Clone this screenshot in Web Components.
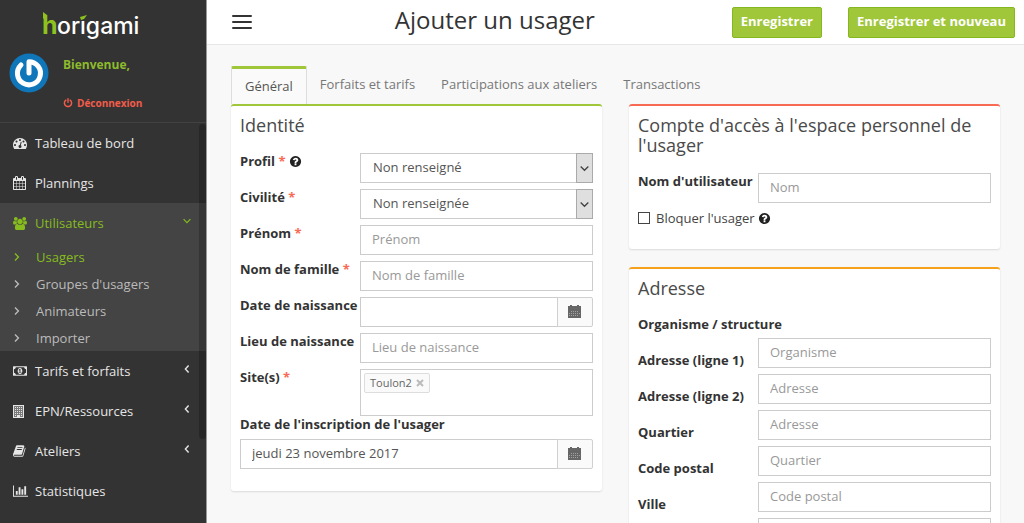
<!DOCTYPE html>
<html lang="fr">
<head>
<meta charset="utf-8">
<title>Ajouter un usager</title>
<style>
html, body { margin: 0; height: 100%; }
body { font: 13px/18px "Open Sans", "Noto Sans", sans-serif; color: #555; background: #f8f8f8; overflow: hidden; }
</style>
</head>
<body>
<horigami-app></horigami-app>
<script>
const BASE = `<style>*,*::before,*::after{box-sizing:border-box}a{color:inherit;text-decoration:none}</style>`;
const define = (name, markup, setup) => {
  const template = document.createElement('template');
  customElements.define(name, class extends HTMLElement {
    connectedCallback() {
      if (this.shadowRoot) return;
      template.innerHTML = BASE + (typeof markup === 'function' ? markup(this) : markup);
      this.attachShadow({ mode: 'open' }).append(template.content.cloneNode(true));
      if (setup) setup(this, this.shadowRoot);
    }
  });
};
const attr = (el, name, fallback = '') => el.getAttribute(name) ?? fallback;

const path = (box, d) => [box, `<path d="${d}"/>`];
const ICONS = {
  power: path('0 0 1792 1792', 'M1664 896q0 156-61 298t-164 245-245 164-298 61-298-61-245-164-164-245-61-298q0-182 80.5-343t226.5-270q43-32 95.5-25t83.5 50q32 42 24.5 94.5t-49.5 84.5q-98 74-151.5 181t-53.5 228q0 104 40.5 198.5t109.5 163.5 163.5 109.5 198.5 40.5 198.5-40.5 163.5-109.5 109.5-163.5 40.5-198.5q0-121-53.5-228t-151.5-181q-42-32-49.5-84.5t24.5-94.5q31-43 84-50t95 25q146 109 226.5 270t80.5 343zm-640-768v640q0 52-38 90t-90 38-90-38-38-90v-640q0-52 38-90t90-38 90 38 38 90z'),
  help: path('0 0 1792 1792', 'M1024 1376v-192q0-14-9-23t-23-9h-192q-14 0-23 9t-9 23v192q0 14 9 23t23 9h192q14 0 23-9t9-23zm256-672q0-88-55.5-163t-138.5-116-170-41q-243 0-371 213-15 24 8 42l132 100q7 6 19 6 16 0 25-12 53-68 86-92 34-24 86-24 48 0 85.5 26t37.5 59q0 38-20 61t-68 45q-63 28-115.5 86.5t-52.5 125.5v36q0 14 9 23t23 9h192q14 0 23-9t9-23q0-19 21.5-49.5t54.5-49.5q32-18 49-28.5t46-35 44.5-48 28-60.5 12.5-81zm384 192q0 209-103 385.5t-279.5 279.5-385.5 103-385.5-103-279.5-279.5-103-385.5 103-385.5 279.5-279.5 385.5-103 385.5 103 279.5 279.5 103 385.5z'),
  calendar: path('64 0 1664 1792', 'M192 1664h288v-288h-288v288zm352 0h320v-288h-320v288zm-352-352h288v-320h-288v320zm352 0h320v-320h-320v320zm-352-384h288v-288h-288v288zm736 736h320v-288h-320v288zm-384-736h320v-288h-320v288zm768 736h288v-288h-288v288zm-384-352h320v-320h-320v320zm-352-864v-288q0-13-9.5-22.5t-22.5-9.5h-64q-13 0-22.5 9.5t-9.5 22.5v288q0 13 9.5 22.5t22.5 9.5h64q13 0 22.5-9.5t9.5-22.5zm736 864h288v-320h-288v320zm-384-384h320v-288h-320v288zm384 0h288v-288h-288v288zm32-480v-288q0-13-9.5-22.5t-22.5-9.5h-64q-13 0-22.5 9.5t-9.5 22.5v288q0 13 9.5 22.5t22.5 9.5h64q13 0 22.5-9.5t9.5-22.5zm384-64v1280q0 52-38 90t-90 38h-1408q-52 0-90-38t-38-90v-1280q0-52 38-90t90-38h128v-96q0-66 47-113t113-47h64q66 0 113 47t47 113v96h384v-96q0-66 47-113t113-47h64q66 0 113 47t47 113v96h128q52 0 90 38t38 90z'),
  dashboard: path('0 0 1792 1792', 'M384 1152q0-53-37.5-90.5t-90.5-37.5-90.5 37.5-37.5 90.5 37.5 90.5 90.5 37.5 90.5-37.5 37.5-90.5zm192-448q0-53-37.5-90.5t-90.5-37.5-90.5 37.5-37.5 90.5 37.5 90.5 90.5 37.5 90.5-37.5 37.5-90.5zm428 481l101-382q6-26-7.5-48.5t-38.5-29.5-48 6.5-30 39.5l-101 382q-60 5-107 43.5t-63 98.5q-20 77 20 146t117 89 146-20 89-117q16-60-6-117t-72-91zm660-33q0-53-37.5-90.5t-90.5-37.5-90.5 37.5-37.5 90.5 37.5 90.5 90.5 37.5 90.5-37.5 37.5-90.5zm-640-640q0-53-37.5-90.5t-90.5-37.5-90.5 37.5-37.5 90.5 37.5 90.5 90.5 37.5 90.5-37.5 37.5-90.5zm448 192q0-53-37.5-90.5t-90.5-37.5-90.5 37.5-37.5 90.5 37.5 90.5 90.5 37.5 90.5-37.5 37.5-90.5zm320 448q0 261-141 483-19 29-54 29h-1402q-35 0-54-29-141-221-141-483 0-182 71-348t191-286 286-191 348-71 348 71 286 191 191 286 71 348z'),
  chart: path('0 0 2048 1792', 'M640 896v512h-256v-512h256zm384-512v1024h-256v-1024h256zm1024 1152v128h-2048v-1536h128v1408h1920zm-640-896v768h-256v-768h256zm384-384v1152h-256v-1152h256z'),
  money: path('0 0 1920 1792', 'M768 1152h384v-96h-128v-448h-114l-148 137 77 80q42-37 55-57h2v288h-128v96zm512-256q0 70-21 142t-59.5 134-101.5 101-138 39-138-39-101.5-101-59.5-134-21-142 21-142 59.5-134 101.5-101 138-39 138 39 101.5 101 59.5 134 21 142zm512 256v-512q-106 0-181-75t-75-181h-1152q0 106-75 181t-181 75v512q106 0 181 75t75 181h1152q0-106 75-181t181-75zm128-832v1152q0 26-19 45t-45 19h-1792q-26 0-45-19t-19-45v-1152q0-26 19-45t45-19h1792q26 0 45 19t19 45z'),
  users: path('0 0 1920 1792', 'M593 896q-162 5-265 128h-134q-82 0-138-40.5t-56-118.5q0-353 124-353 6 0 43.5 21t97.5 42.5 119 21.5q67 0 133-23-5 37-5 66 0 139 81 256zm1071 637q0 120-73 189.5t-194 69.5h-874q-121 0-194-69.5t-73-189.5q0-53 3.5-103.5t14-109 26.5-108.5 43-97.5 62-81 85.5-53.5 111.5-20q10 0 43 21.5t73 48 107 48 135 21.5 135-21.5 107-48 73-48 43-21.5q61 0 111.5 20t85.5 53.5 62 81 43 97.5 26.5 108.5 14 109 3.5 103.5zm-1024-1277q0 106-75 181t-181 75-181-75-75-181 75-181 181-75 181 75 75 181zm704 384q0 159-112.5 271.5t-271.5 112.5-271.5-112.5-112.5-271.5 112.5-271.5 271.5-112.5 271.5 112.5 112.5 271.5zm576 225q0 78-56 118.5t-138 40.5h-134q-103-123-265-128 81-117 81-256 0-29-5-66 66 23 133 23 59 0 119-21.5t97.5-42.5 43.5-21q124 0 124 353zm-128-609q0 106-75 181t-181 75-181-75-75-181 75-181 181-75 181 75 75 181z'),
  book: path('64 0 1728 1792', 'M1703 478q40 57 18 129l-275 906q-19 64-76.5 107.5t-122.5 43.5h-923q-77 0-148.5-53.5t-99.5-131.5q-24-67-2-127 0-4 3-27t4-37q1-8-3-21.5t-3-19.5q2-11 8-21t16.5-23.5 16.5-23.5q23-38 45-91.5t30-91.5q3-10 .5-30t-.5-28q3-11 17-28t17-23q21-36 42-92t25-90q1-9-2.5-32t.5-28q4-13 22-30.5t22-22.5q19-26 42.5-84.5t27.5-96.5q1-8-3-25.5t-2-26.5q2-8 9-18t18-23 17-21q8-12 16.5-30.5t15-35 16-36 19.5-32 26.5-23.5 36-11.5 47.5 5.5l-1 3q38-9 51-9h761q74 0 114 56t18 130l-274 906q-36 119-71.5 153.5t-128.5 34.5h-869q-27 0-38 15-11 16-1 43 24 70 144 70h923q29 0 56-15.5t35-41.5l300-987q7-22 5-57 38 15 59 43zm-1064 2q-4 13 2 22.5t20 9.5h608q13 0 25.5-9.5t16.5-22.5l21-64q4-13-2-22.5t-20-9.5h-608q-13 0-25.5 9.5t-16.5 22.5zm-83 256q-4 13 2 22.5t20 9.5h608q13 0 25.5-9.5t16.5-22.5l21-64q4-13-2-22.5t-20-9.5h-608q-13 0-25.5 9.5t-16.5 22.5z'),
  building: ['0 0 11 13', '<path d="M1 1H10V12H1z" opacity=".4"/><path d="M0 0H11V13H0zM1 1V12H4V10H7V12H10V1zM2 2H3V3H2zM4 2H5V3H4zM6 2H7V3H6zM8 2H9V3H8zM2 4H3V5H2zM4 4H5V5H4zM6 4H7V5H6zM8 4H9V5H8zM2 6H3V7H2zM4 6H5V7H4zM6 6H7V7H6zM8 6H9V7H8zM2 8H3V9H2zM4 8H5V9H4zM6 8H7V9H6zM8 8H9V9H8zM2 10H3V11H2zM8 10H9V11H8z"/>'],
  datepad: ['0 0 13 13', '<path d="M0 1H2V0H4V1H9V0H11V1H13V4H0z"/><path d="M1 5H12V12H1z" opacity=".6"/><path fill-rule="evenodd" d="M0 4H13V13H0zM3 6V7H4V6zM5 6V7H6V6zM7 6V7H8V6zM9 6V7H10V6zM1 8V9H2V8zM3 8V9H4V8zM5 8V9H6V8zM7 8V9H8V8zM9 8V9H10V8zM11 8V9H12V8zM1 10V11H2V10zM3 10V11H4V10zM5 10V11H6V10zM7 10V11H8V10zM9 10V11H10V10z"/>'],
  right: ['0 0 8 8', '<path d="M2 0.6L5.4 4L2 7.4" fill="none" stroke="currentColor" stroke-width="1.4"/>'],
  left: ['0 0 8 8', '<path d="M5.6 0.6L2.4 4L5.6 7.4" fill="none" stroke="currentColor" stroke-width="1.4"/>'],
  down: ['0 0 8 8', '<path d="M0.6 2.2L4 5.6L7.4 2.2" fill="none" stroke="currentColor" stroke-width="1.2"/>'],
  cross: ['0 0 8 8', '<path d="M1 1L7 7M7 1L1 7" fill="none" stroke="currentColor" stroke-width="2"/>'],
  burger: ['0 0 20 14', '<path d="M1 1H19M1 7H19M1 13H19" fill="none" stroke="currentColor" stroke-width="2" stroke-linecap="round"/>']
};

define('ui-icon', el => {
  const [box, body] = ICONS[attr(el, 'name')];
  return `<style>
    :host{display:inline-block;flex:none;width:var(--icon-w,14px);height:var(--icon-h,14px)}
    svg{display:block;width:100%;height:100%;fill:currentColor}
  </style><svg viewBox="${box}" aria-hidden="true">${body}</svg>`;
});

/* ---------- sidebar ---------- */
define('brand-logo', `<style>
  :host{display:block;width:104px;height:32px}
  svg{display:block;width:100%;height:100%;overflow:visible}
  text{font-family:Inter,"Open Sans",sans-serif}
  .h{fill:#8dc21f;font-size:25px;font-weight:700}
  .rest{fill:#fff;font-size:23px;font-weight:500}
</style>
<svg viewBox="0 0 104 32" role="img" aria-label="horigami">
  <text y="24"><tspan class="h" x="0">h</tspan><tspan class="rest" x="15">origami</tspan></text>
  <path d="M1 2L5 5V12L1 8z" fill="#8dc21f"/>
  <path d="M37 3h7v7h-7z" fill="#333"/>
  <path d="M38 7L45 5L42 9L39 10z" fill="#8dc21f"/>
</svg>`);

define('user-box', `<style>
  :host{display:flex;gap:14px;align-items:flex-start;padding:0 9px}
  .avatar{width:40px;height:40px;flex:none}
  .who{display:flex;flex-direction:column;gap:20px;padding-top:3px}
  .hello{color:#8dbb2c;font-size:12px;font-weight:700}
  a{display:flex;align-items:center;gap:4px;color:#f25c4a;font-size:10px;font-weight:700;--icon-w:10px;--icon-h:10px}
</style>
<svg class="avatar" viewBox="0 0 40 40" aria-hidden="true">
  <circle cx="20" cy="20" r="19.5" fill="#0f76b9"/>
  <path d="M12 12A11.5 11.5 0 1 0 20 8.8V20" fill="none" stroke="#fff" stroke-width="5" stroke-linecap="round" stroke-linejoin="round"/>
</svg>
<div class="who"><span class="hello">Bienvenue,</span>
<a href="#deconnexion"><ui-icon name="power"></ui-icon>Déconnexion</a></div>`);

define('nav-item', el => `<style>
  :host{display:block;color:#e6e6e6}
  :host([active]){background:#444;color:#86bc1e}
  a.main{display:flex;align-items:center;height:40px;padding:0 15px 0 13px}
  .ico{width:22px;flex:none;display:flex;--icon-w:${attr(el, 'iw', '14')}px;--icon-h:${attr(el, 'ih', '14')}px}
  .label{flex:1}
  .arrow{--icon-w:8px;--icon-h:8px;margin-bottom:4px}
</style>
<a class="main" href="#${attr(el, 'icon')}"><span class="ico"><ui-icon name="${attr(el, 'icon')}"></ui-icon></span>
<span class="label">${attr(el, 'label')}</span>${el.hasAttribute('arrow') ? `<ui-icon class="arrow" name="${attr(el, 'arrow')}"></ui-icon>` : ''}</a>
<slot></slot>`);

define('nav-subitem', `<style>
  :host{display:block;color:#bbb}
  :host([current]){color:#86bc1e}
  a{display:flex;align-items:center;height:27px;padding-left:13px;gap:15px;--icon-w:8px;--icon-h:8px}
</style><a href="#section"><ui-icon name="right"></ui-icon><span><slot></slot></span></a>`);

define('side-bar', `<style>
  :host{display:block;position:relative;background:#333;border-right:1px solid #999;overflow:hidden}
  header{display:flex;flex-direction:column;gap:11px;height:123px;padding-top:10px;border-bottom:1px solid #434143}
  brand-logo{align-self:flex-start;margin-left:42px}
  .menu{position:relative;display:flex;flex-direction:column}
  .thumb{position:absolute;top:1px;right:0;width:7px;height:315px;border-radius:4px;background:rgba(0,0,0,.22)}
</style>
<header><brand-logo></brand-logo><user-box></user-box></header>
<nav class="menu" aria-label="Navigation principale">
  <nav-item icon="dashboard" label="Tableau de bord"></nav-item>
  <nav-item icon="calendar" iw="13" label="Plannings"></nav-item>
  <nav-item active icon="users" ih="13" label="Utilisateurs" arrow="down">
    <nav-subitem current>Usagers</nav-subitem>
    <nav-subitem>Groupes d'usagers</nav-subitem>
    <nav-subitem>Animateurs</nav-subitem>
    <nav-subitem>Importer</nav-subitem>
  </nav-item>
  <nav-item icon="money" label="Tarifs et forfaits" arrow="left"></nav-item>
  <nav-item icon="building" iw="11" ih="13" label="EPN/Ressources" arrow="left"></nav-item>
  <nav-item icon="book" iw="13" label="Ateliers" arrow="left"></nav-item>
  <nav-item icon="chart" iw="15" label="Statistiques"></nav-item>
  <div class="thumb"></div>
</nav>`);

/* ---------- header and tabs ---------- */
define('page-header', `<style>
  :host{display:flex;align-items:center;height:45px;flex:none;padding:0 9px 0 25px;background:#fff;border-bottom:1px solid #e7e7e7}
  .burger{border:0;padding:0;background:none;color:#333;display:flex;--icon-w:20px;--icon-h:14px}
  h1{flex:1;margin:0;padding:0 0 4px 6px;text-align:center;font-size:24px;line-height:32px;font-weight:400;color:#333}
  .actions{display:flex;gap:26px}
  .save{height:31px;padding:0 8px 2px;border:1px solid #85b81f;border-radius:2px;background:#a0c63a;color:#fff;font:700 13px/18px "Open Sans",sans-serif}
</style>
<button class="burger" type="button" aria-label="Menu"><ui-icon name="burger"></ui-icon></button>
<h1>Ajouter un usager</h1>
<div class="actions"><button class="save" type="button">Enregistrer</button><button class="save" type="button">Enregistrer et nouveau</button></div>`);

define('tab-bar', `<style>
  :host{display:flex;height:38px}
  a{padding:9px 13px 0;color:#777}
  a[aria-current]{padding:8px 13px 0;border:1px solid #ddd;border-top:3px solid #a0c63a;border-bottom:0;border-radius:2px 2px 0 0;color:#555;background:#fafafa}
</style>
<a href="#general" aria-current="page">Général</a><a href="#forfaits">Forfaits et tarifs</a><a href="#ateliers">Participations aux ateliers</a><a href="#transactions">Transactions</a>`);

/* ---------- form ---------- */
define('panel-card', el => `<style>
  :host{display:block;background:#fff;border-top:2px solid var(--accent);border-radius:3px;box-shadow:0 1px 2px rgba(0,0,0,.12);padding:9px 9px 22px}
  h2{margin:0 0 18px;font-size:18px;line-height:20px;font-weight:400;color:#4a4a4a}
</style><h2>${attr(el, 'heading')}</h2><slot></slot>`);

const CONTROL = `<style>
  input,select{width:100%;height:30px;margin:0;padding:0 11px 2px;border:1px solid #ccc;border-radius:0;background:#fff;color:#555;font:13px/18px "Open Sans",sans-serif;appearance:none;outline:0;display:block;min-width:0}
  input::placeholder{color:#999;opacity:1}
  select{padding-left:12px}
  label,.label{font-weight:700;color:#333;white-space:nowrap}
  .pick{display:grid;grid-template-columns:1fr 17px}
  .pick select{grid-area:1/1/2/3}
  .pick .drop{grid-area:1/2;display:grid;place-items:center;border:1px solid #aaa;background:#dfdfdf;color:#444;pointer-events:none;--icon-w:9px;--icon-h:9px}
  .date{display:flex}
  .date button{width:36px;height:30px;flex:none;margin-left:-1px;padding:0 1px 2px 0;border:1px solid #d0d0d0;border-radius:0 2px 2px 0;background:#fafafa;color:#666;display:grid;place-items:center;--icon-w:13px;--icon-h:13px}
  .tags{height:47px;padding:3px;border:1px solid #ccc;display:flex;align-items:flex-start}
  .tag{display:flex;align-items:center;gap:4px;height:20px;padding:0 5px;border:1px solid #ddd;border-radius:2px;background:#fafafa;color:#666;font-size:11px}
  .tag button{border:0;padding:0;background:none;color:#bbb;display:flex;--icon-w:8px;--icon-h:8px}
</style>`;

define('form-field', el => {
  const type = attr(el, 'type', 'text'), value = attr(el, 'value');
  const control = {
    text: `<input id="f" type="text" placeholder="${attr(el, 'placeholder')}">`,
    select: `<div class="pick"><select id="f"><option>${value}</option></select><span class="drop"><ui-icon name="down"></ui-icon></span></div>`,
    date: `<div class="date"><input id="f" type="text" value="${value}"><button type="button" aria-label="Choisir une date"><ui-icon name="datepad"></ui-icon></button></div>`,
    tags: `<div class="tags" role="group" aria-labelledby="l"><span class="tag">${value}<button type="button" aria-label="Retirer"><ui-icon name="cross"></ui-icon></button></span></div>`
  }[type];
  const text = attr(el, 'label') + (el.hasAttribute('required') ? ' <span class="req">*</span>' : '');
  return CONTROL + `<style>
    :host{display:grid;grid-template-columns:120px minmax(0,1fr)}
    :host([stacked]){grid-template-columns:minmax(0,1fr);row-gap:7px}
    .head{display:flex;gap:3px;align-items:center;height:16px;color:#222;--icon-w:13px;--icon-h:13px}
    .req{color:#f96a55}
  </style>
  <div class="head">${type === 'tags' ? `<span class="label" id="l">${text}</span>` : `<label for="f">${text}</label>`}${el.hasAttribute('help') ? '<ui-icon name="help"></ui-icon>' : ''}</div>${control}`;
});

define('check-field', el => `<style>
  :host{display:flex;align-items:center;gap:3px;height:18px;color:#222;--icon-w:13px;--icon-h:13px}
  label{display:flex;align-items:center;gap:6px;color:#444}
  input{appearance:none;width:12px;height:12px;margin:0;border:1px solid #444;background:#fff}
</style><label><input type="checkbox">${attr(el, 'label')}</label><ui-icon name="help"></ui-icon>`);

define('field-stack', `<style>:host{display:flex;flex-direction:column;gap:6px}</style><slot></slot>`);

/* Labels and inputs run in two independent columns, the inputs starting lower. */
const ADDRESS = [['Organisme / structure', 'Organisme'], ['Adresse (ligne 1)', 'Adresse'], ['Adresse (ligne 2)', 'Adresse'], ['Quartier', 'Quartier'], ['Code postal', 'Code postal'], ['Ville', 'Ville']];
define('address-fields', CONTROL + `<style>
  :host{display:grid;grid-template-columns:120px minmax(0,1fr)}
  .labels,.inputs{display:flex;flex-direction:column}
  .labels{gap:20px;line-height:16px}
  .inputs{gap:6px;padding-top:22px}
</style>
<div class="labels">${ADDRESS.map(([l], i) => `<label for="a${i}">${l}</label>`).join('')}</div>
<div class="inputs">${ADDRESS.map(([, p], i) => `<input id="a${i}" type="text" placeholder="${p}">`).join('')}</div>`);

define('user-form', `<style>
  :host{display:grid;grid-template-columns:minmax(0,1fr) minmax(0,1fr);gap:27px;align-items:start}
  .column{display:flex;flex-direction:column;gap:18px}
  .green{--accent:#a0c63a}.red{--accent:#f96a55}.orange{--accent:#f5a11c}
</style>
<panel-card class="green" heading="Identité"><field-stack>
  <form-field label="Profil" required help type="select" value="Non renseigné"></form-field>
  <form-field label="Civilité" required type="select" value="Non renseignée"></form-field>
  <form-field label="Prénom" required placeholder="Prénom"></form-field>
  <form-field label="Nom de famille" required placeholder="Nom de famille"></form-field>
  <form-field label="Date de naissance" type="date"></form-field>
  <form-field label="Lieu de naissance" placeholder="Lieu de naissance"></form-field>
  <form-field label="Site(s)" required type="tags" value="Toulon2"></form-field></field-stack>
  <form-field stacked label="Date de l'inscription de l'usager" type="date" value="jeudi 23 novembre 2017"></form-field>
</panel-card>
<div class="column">
  <panel-card class="red" heading="Compte d'accès à l'espace personnel de l'usager"><field-stack>
    <form-field label="Nom d'utilisateur" placeholder="Nom"></form-field>
    <check-field label="Bloquer l'usager"></check-field>
  </field-stack></panel-card>
  <panel-card class="orange" heading="Adresse"><address-fields></address-fields></panel-card>
</div>`);

define('horigami-app', `<style>
  :host{display:grid;grid-template-columns:207px minmax(0,1fr);height:100vh}
  main{display:flex;flex-direction:column;min-height:0}
  .content{flex:1;min-height:0;overflow-y:auto;scrollbar-width:none;padding:21px 24px}
</style>
<side-bar></side-bar>
<main><page-header></page-header><div class="content"><tab-bar></tab-bar><user-form></user-form></div></main>`);
</script>
</body>
</html>
